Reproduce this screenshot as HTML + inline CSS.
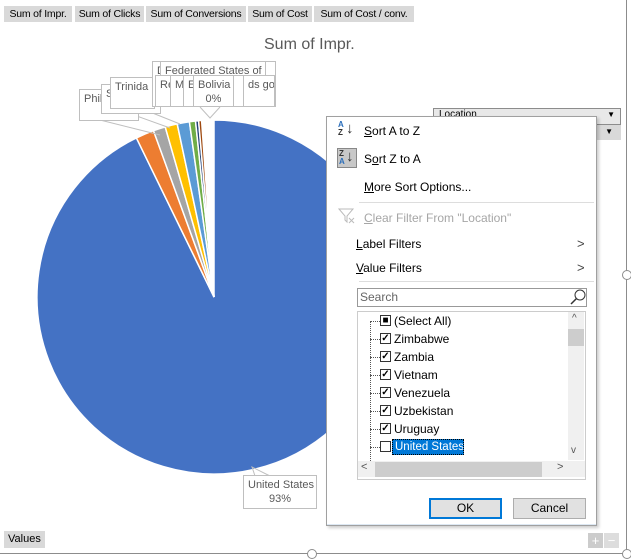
<!DOCTYPE html>
<html><head><meta charset="utf-8"><style>
*{margin:0;padding:0;box-sizing:border-box}
body{width:631px;height:558px;background:#fff;position:relative;overflow:hidden;font-family:"Liberation Sans",sans-serif;font-size:12px;color:#000}
.a{position:absolute}
.btn{position:absolute;top:6px;height:16px;background:#d9d9d9;font-size:10.5px;line-height:16px;text-align:center;color:#000;white-space:nowrap;overflow:hidden;letter-spacing:-0.2px}
.lb{position:absolute;background:#fff;border:1px solid #bfbfbf;color:#595959;font-size:11px;line-height:14px;padding:2px 4px;white-space:nowrap;overflow:hidden}
.mi{position:absolute;left:364px;font-size:12px;color:#000}
.u{text-decoration:underline}
.li{position:absolute;left:394px;font-size:12px;white-space:nowrap}
.cb{position:absolute;left:380px;width:11px;height:11px;border:1px solid #333;background:#fff;font-size:10px;line-height:9px;text-align:center;font-weight:bold}
.dot{position:absolute;left:370px;width:10px;border-top:1px dotted #555}
</style></head><body>
<div class="btn" style="left:4px;width:68px">Sum of Impr.</div>
<div class="btn" style="left:75px;width:69px">Sum of Clicks</div>
<div class="btn" style="left:146px;width:100px">Sum of Conversions</div>
<div class="btn" style="left:248px;width:64px">Sum of Cost</div>
<div class="btn" style="left:314px;width:100px">Sum of Cost / conv.</div>
<div class="a" style="left:264px;top:36px;font-size:16px;color:#595959">Sum of Impr.</div>
<div class="a" style="left:-5px;top:-5px;width:632px;height:559px;border:1px solid #8c8c8c"></div>
<div class="a" style="left:622px;top:270px;width:10px;height:10px;border:1px solid #8c8c8c;border-radius:50%;background:#fff"></div>
<div class="a" style="left:307px;top:549px;width:10px;height:10px;border:1px solid #8c8c8c;border-radius:50%;background:#fff"></div>
<div class="a" style="left:622px;top:549px;width:10px;height:10px;border:1px solid #8c8c8c;border-radius:50%;background:#fff"></div>
<svg class="a" style="left:0;top:0" width="631" height="558">
<g stroke="#fff" stroke-width="1.5">
<path d="M214 297 L214 120 A177 177 0 1 1 136.4 137.9 Z" fill="#4472c4"/>
<path d="M214 297 L136.4 137.9 A177 177 0 0 1 153.5 130.7 Z" fill="#ed7d31"/>
<path d="M214 297 L153.5 130.7 A177 177 0 0 1 165.2 126.9 Z" fill="#a5a5a5"/>
<path d="M214 297 L165.2 126.9 A177 177 0 0 1 177.2 123.9 Z" fill="#ffc000"/>
<path d="M214 297 L177.2 123.9 A177 177 0 0 1 189.4 121.7 Z" fill="#5b9bd5"/>
<path d="M214 297 L189.4 121.7 A177 177 0 0 1 195.5 121 Z" fill="#70ad47"/>
<path d="M214 297 L195.5 121 A177 177 0 0 1 198.6 120.7 Z" fill="#264478"/>
<path d="M214 297 L198.6 120.7 A177 177 0 0 1 201.6 120.4 Z" fill="#9e480e"/>
</g>
<g stroke="#bfbfbf" fill="none">
<path d="M100 120 L160 135 M120 110 L170 128 M140 108 L180 124 M200 107 L210 118 L220 107"/>
<path d="M255 476 L252 467 L270 476"/>
</g>
</svg>
<div class="lb" style="left:79px;top:89px;width:60px;height:32px">Phil</div>
<div class="lb" style="left:101px;top:84px;width:60px;height:30px">S</div>
<div class="lb" style="left:110px;top:77px;width:45px;height:32px">Trinida</div>
<div class="lb" style="left:152px;top:61px;width:124px;height:46px">D</div>
<div class="lb" style="left:160px;top:61px;width:106px;height:18px">Federated States of</div>
<div class="lb" style="left:155px;top:75px;width:120px;height:32px">Re</div>
<div class="lb" style="left:170px;top:75px;width:20px;height:32px">M</div>
<div class="lb" style="left:183px;top:75px;width:20px;height:32px">E</div>
<div class="lb" style="left:243px;top:75px;width:32px;height:32px">ds go</div>
<div class="lb" style="left:193px;top:75px;width:41px;height:32px;text-align:center">Bolivia<br>0%</div>
<div class="lb" style="left:243px;top:475px;width:74px;height:34px;text-align:center;padding-top:2px">United States<br>93%</div>
<div class="a" style="left:4px;top:531px;height:17px;background:#d9d9d9;font-size:11px;line-height:17px;padding:0 4px">Values</div>
<div class="a" style="left:433px;top:108px;width:188px;height:17px;background:#e8e8e8;border:1px solid #8c8c8c;font-size:10px;padding-left:5px">Location<span style="position:absolute;right:5px;top:1px;font-size:8px">▼</span></div>
<div class="a" style="left:433px;top:125px;width:188px;height:15px;background:#d9d9d9"><span style="position:absolute;right:8px;top:2px;font-size:8px">▼</span></div>
<div class="a" style="left:326px;top:116px;width:271px;height:410px;background:#fff;border:1px solid #a0a0a0;box-shadow:2px 2px 3px rgba(0,0,0,.2)"></div>
<div class="a" style="left:338px;top:121px;font-size:8px;line-height:8px;color:#2a6ebb;font-weight:bold">A<br><span style="color:#333">Z</span></div><div class="a" style="left:346px;top:120px;font-size:15px;color:#333">↓</div>
<div class="a" style="left:337px;top:148px;width:20px;height:20px;background:#c8c8c8;border:1px solid #888"></div>
<div class="a" style="left:339px;top:150px;font-size:8px;line-height:8px;color:#333;font-weight:bold">Z<br><span style="color:#2a6ebb">A</span></div><div class="a" style="left:346px;top:148px;font-size:15px;color:#333">↓</div>
<div class="mi" style="top:124px"><span class="u">S</span>ort A to Z</div>
<div class="mi" style="top:152px">S<span class="u">o</span>rt Z to A</div>
<div class="mi" style="top:180px"><span class="u">M</span>ore Sort Options...</div>
<div class="a" style="left:359px;top:202px;width:235px;border-top:1px solid #ddd"></div>
<svg class="a" style="left:338px;top:208px" width="18" height="16"><path d="M1 1 H15 L9 8 V14 L7 12 V8 Z" fill="none" stroke="#bbb"/><path d="M11 10 L16 15 M16 10 L11 15" stroke="#bbb"/></svg>
<div class="mi" style="top:211px;color:#a6a6a6"><span class="u">C</span>lear Filter From "Location"</div>
<div class="mi" style="top:237px;left:356px"><span class="u">L</span>abel Filters</div>
<div class="mi" style="top:261px;left:356px"><span class="u">V</span>alue Filters</div>
<div class="a" style="left:577px;top:236px;font-size:13px;color:#444">&gt;</div>
<div class="a" style="left:577px;top:260px;font-size:13px;color:#444">&gt;</div>
<div class="a" style="left:359px;top:281px;width:235px;border-top:1px solid #ddd"></div>
<div class="a" style="left:357px;top:288px;width:230px;height:19px;border:1px solid #999;font-size:12px;color:#666;padding-left:2px;line-height:17px">Search</div>
<svg class="a" style="left:570px;top:289px" width="16" height="16"><circle cx="10" cy="6" r="5" fill="none" stroke="#333"/><path d="M6.5 9.5 L1 15" stroke="#333" stroke-width="1.5"/></svg>
<div class="a" style="left:357px;top:311px;width:229px;height:169px;border:1px solid #ccc"></div>
<div class="a" style="left:370px;top:321px;height:140px;border-left:1px dotted #555"></div>
<div class="dot" style="top:321px"></div><div class="cb" style="top:315px">■</div><div class="li" style="top:314px">(Select All)</div>
<div class="dot" style="top:339px"></div><div class="cb" style="top:333px">✓</div><div class="li" style="top:332px">Zimbabwe</div>
<div class="dot" style="top:357px"></div><div class="cb" style="top:351px">✓</div><div class="li" style="top:350px">Zambia</div>
<div class="dot" style="top:375px"></div><div class="cb" style="top:369px">✓</div><div class="li" style="top:368px">Vietnam</div>
<div class="dot" style="top:393px"></div><div class="cb" style="top:387px">✓</div><div class="li" style="top:386px">Venezuela</div>
<div class="dot" style="top:411px"></div><div class="cb" style="top:405px">✓</div><div class="li" style="top:404px">Uzbekistan</div>
<div class="dot" style="top:429px"></div><div class="cb" style="top:423px">✓</div><div class="li" style="top:422px">Uruguay</div>
<div class="dot" style="top:447px"></div><div class="cb" style="top:441px"></div>
<div class="a" style="left:392px;top:439px;width:72px;height:16px;background:#0078d7;color:#fff;border:1px dotted #000;padding-left:2px;line-height:14px;white-space:nowrap;overflow:hidden;font-size:11.5px">United States</div>
<div class="a" style="left:568px;top:312px;width:16px;height:148px;background:#f0f0f0"></div>
<div class="a" style="left:568px;top:329px;width:16px;height:17px;background:#cdcdcd"></div>
<div class="a" style="left:572px;top:313px;font-size:10px;color:#555">^</div>
<div class="a" style="left:571px;top:445px;font-size:10px;color:#555">v</div>
<div class="a" style="left:358px;top:461px;width:227px;height:16px;background:#f0f0f0"></div>
<div class="a" style="left:375px;top:462px;width:167px;height:15px;background:#cdcdcd"></div>
<div class="a" style="left:361px;top:461px;font-size:11px;color:#555">&lt;</div>
<div class="a" style="left:557px;top:461px;font-size:11px;color:#555">&gt;</div>
<div class="a" style="left:429px;top:498px;width:73px;height:21px;border:2px solid #0078d7;background:#e1e1e1;text-align:center;line-height:17px">OK</div>
<div class="a" style="left:513px;top:498px;width:73px;height:21px;border:1px solid #adadad;background:#e1e1e1;text-align:center;line-height:19px">Cancel</div>
<div class="a" style="left:327px;top:524px;width:269px;border-top:1px solid #dde8f3"></div>
<div class="a" style="left:588px;top:533px;width:15px;height:15px;background:#ccc;color:#fff;text-align:center;font-size:13px;line-height:15px">+</div>
<div class="a" style="left:604px;top:533px;width:15px;height:15px;background:#ddd;color:#fff;text-align:center;font-size:13px;line-height:15px">−</div>
</body></html>
